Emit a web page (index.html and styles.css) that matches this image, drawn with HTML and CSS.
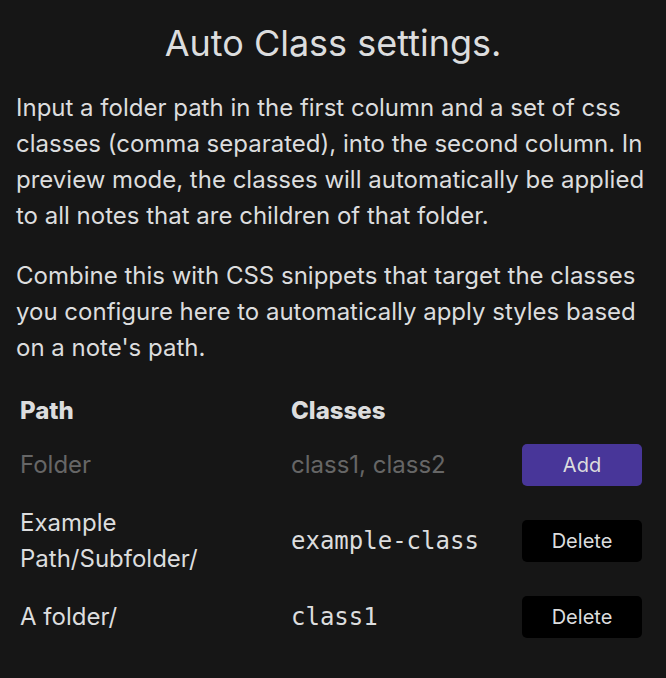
FILE: index.html
```html
<!DOCTYPE html>
<html>
<head>
<meta charset="utf-8">
<link rel="stylesheet" href="styles.css">
</head>
<body>
<div class="settings">
  <h2 class="title">Auto Class settings.</h2>
  <p class="desc">Input a folder path in the first column and a set of css classes (comma separated), into the second column. In preview mode, the classes will automatically be applied to all notes that are children of that folder.</p>
  <p class="desc">Combine this with CSS snippets that target the classes you configure here to automatically apply styles based on a note's path.</p>
  <div class="table">
    <div class="cell head">Path</div>
    <div class="cell head">Classes</div>
    <div class="cell head"></div>

    <div class="cell"><input class="field" type="text" placeholder="Folder"></div>
    <div class="cell"><input class="field" type="text" placeholder="class1, class2"></div>
    <div class="cell"><button class="btn btn-add">Add</button></div>

    <div class="cell">Example Path/Subfolder/</div>
    <div class="cell mono">example-class</div>
    <div class="cell"><button class="btn btn-del">Delete</button></div>

    <div class="cell">A folder/</div>
    <div class="cell mono">class1</div>
    <div class="cell"><button class="btn btn-del">Delete</button></div>
  </div>
</div>
</body>
</html>
```

FILE: styles.css
```css
html, body {
  margin: 0;
  padding: 0;
  background: #161616;
}
body {
  font-family: Inter, "Noto Sans", sans-serif;
  color: #dcddde;
  font-size: 24px;
  line-height: 36px;
}
.settings {
  padding: 22px 16px 0 16px;
}
.title {
  margin: 0 0 26px 0;
  font-size: 36px;
  line-height: 42px;
  font-weight: 400;
  text-align: center;
}
.desc {
  margin: 0 0 24px 0;
}
.desc + .desc {
  margin-bottom: 21px;
}
.table {
  display: grid;
  grid-template-columns: 271px 231px 128px;
  align-items: center;
}
.cell {
  padding: 9.5px 4px;
}
.head {
  font-weight: 800;
  line-height: 28px;
}
.field {
  background: transparent;
  border: none;
  outline: none;
  font: inherit;
  color: #dcddde;
  padding: 0;
  width: 100%;
  height: 36px;
}
.field::placeholder {
  color: #666666;
}
.mono {
  font-family: "DejaVu Sans Mono", "Liberation Mono", monospace;
  font-size: 24px;
}
.btn {
  display: block;
  width: 120px;
  height: 42px;
  border: none;
  border-radius: 5px;
  font-family: Inter, "Noto Sans", sans-serif;
  font-size: 20px;
  color: #dcddde;
  cursor: pointer;
}
.btn-add {
  background: #483699;
}
.btn-del {
  background: #000000;
}
```
